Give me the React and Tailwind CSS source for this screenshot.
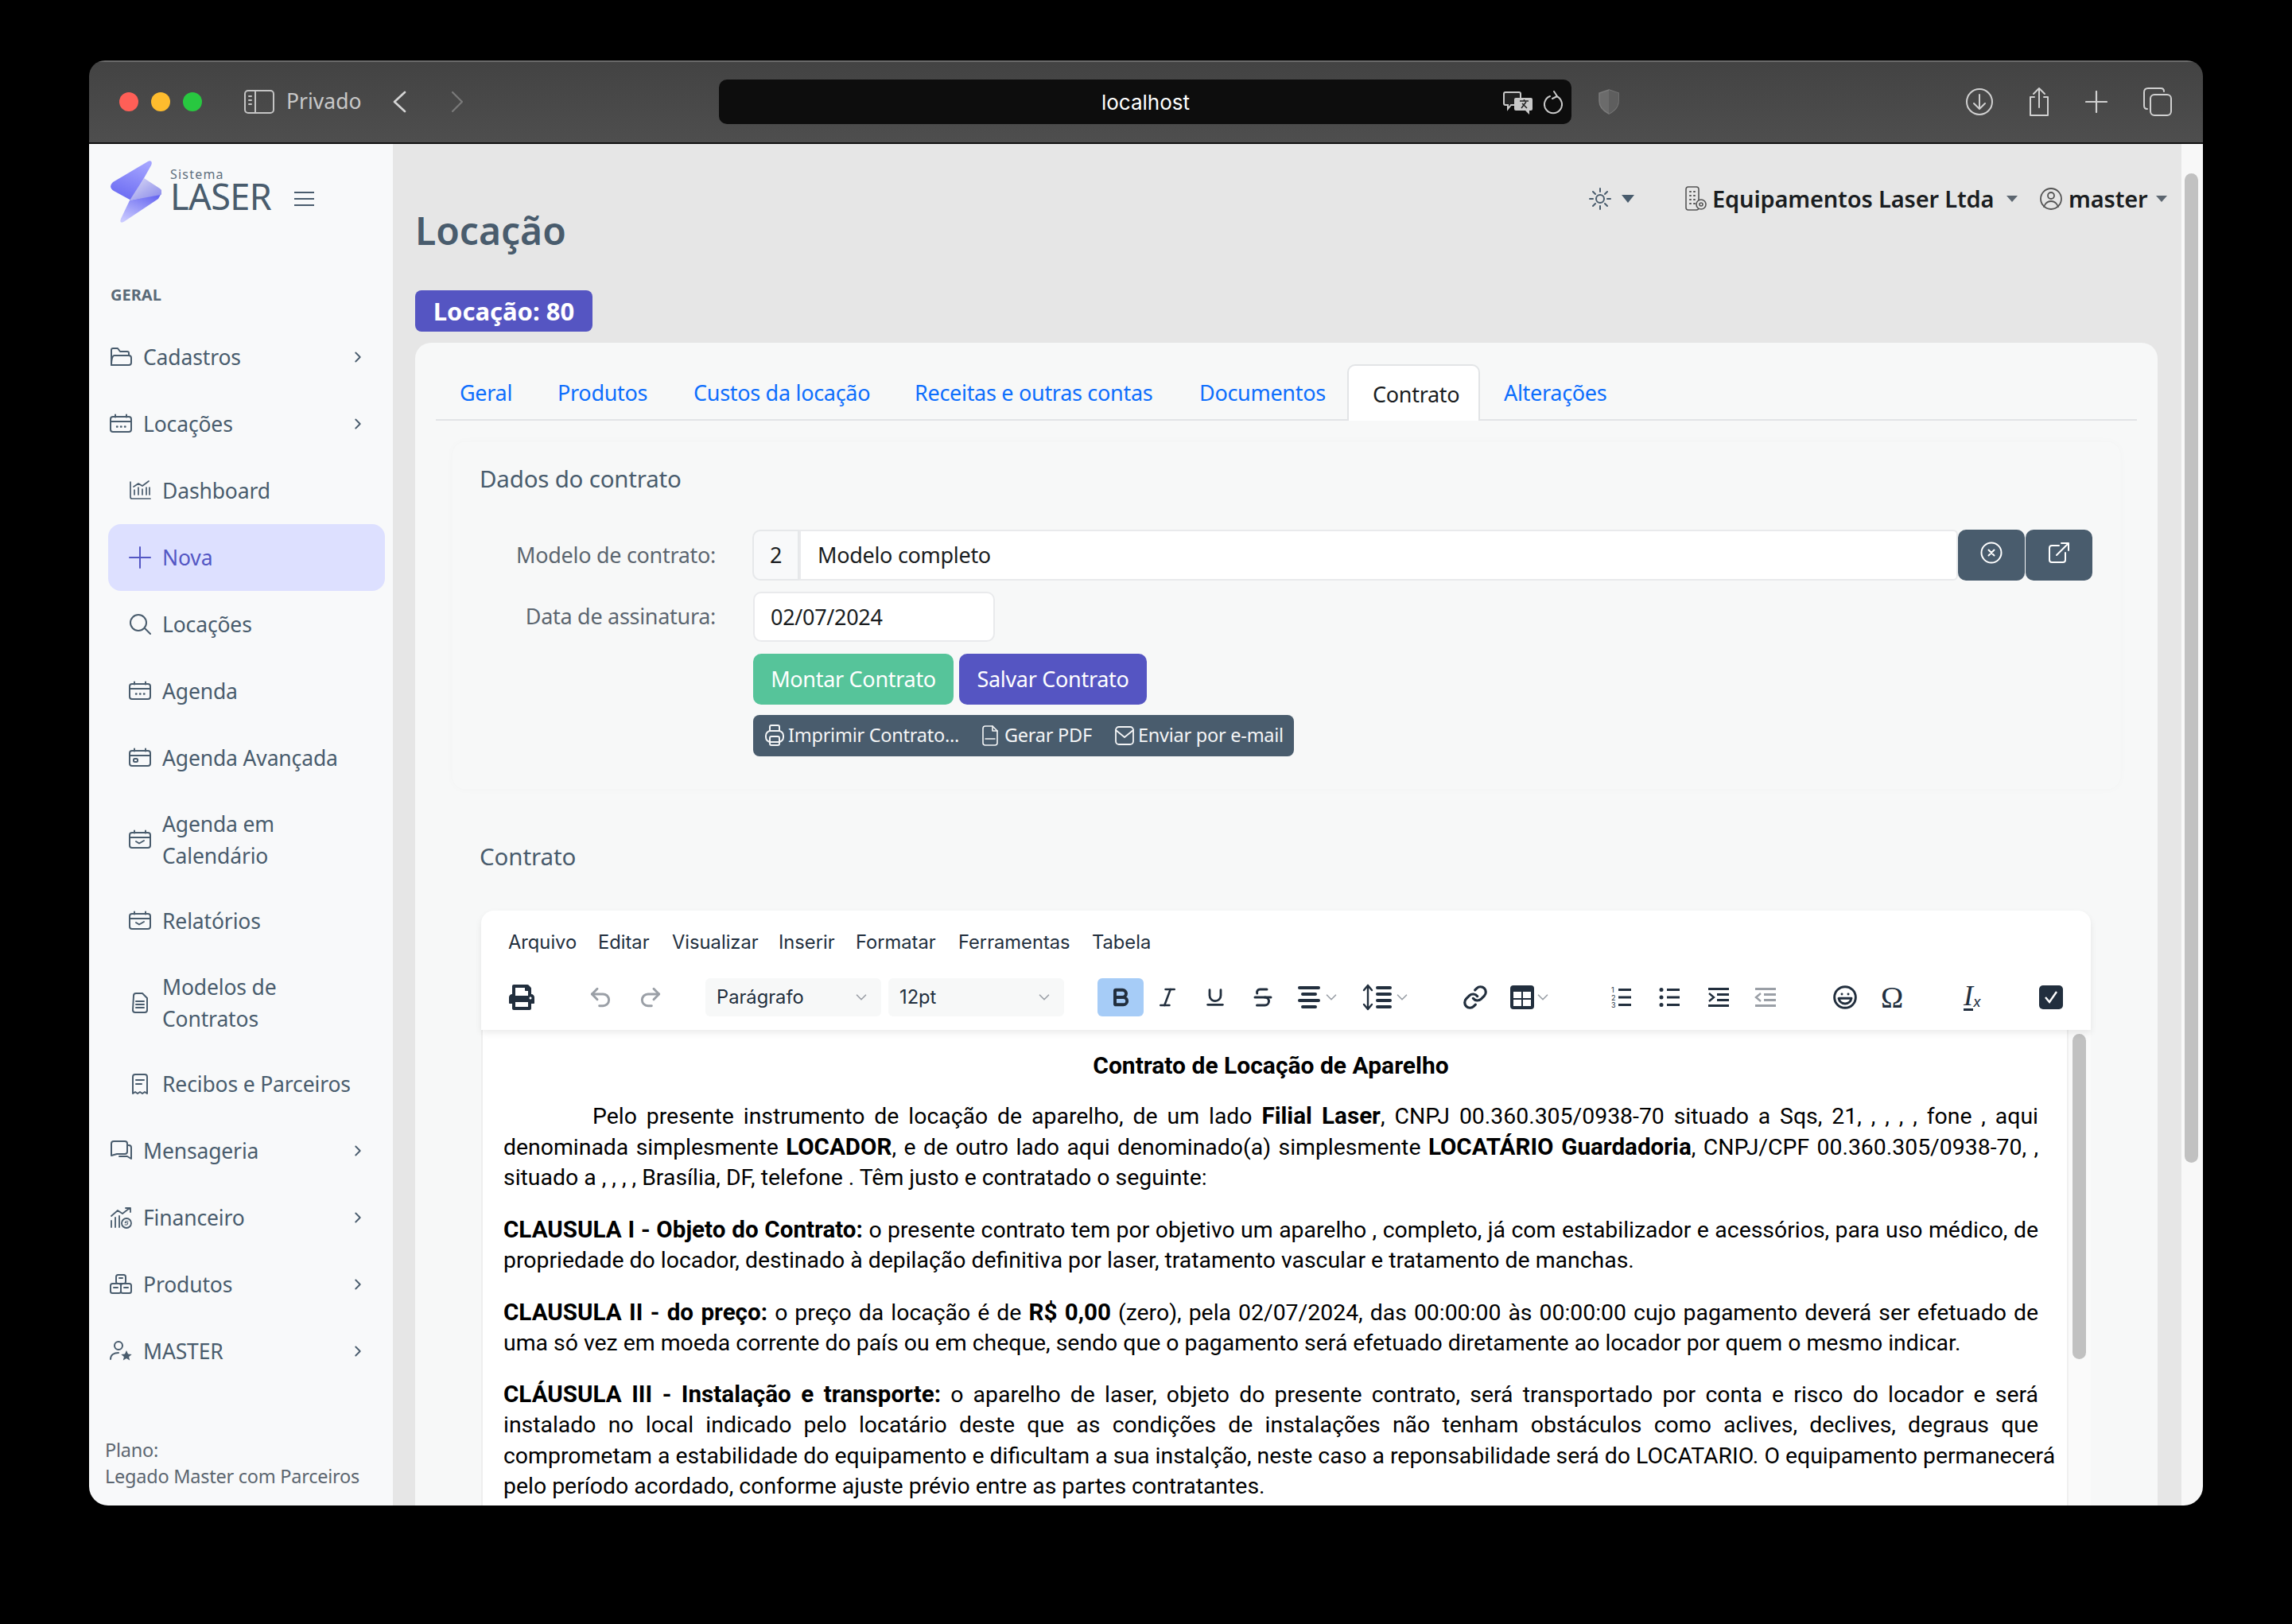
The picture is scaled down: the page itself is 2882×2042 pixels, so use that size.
import React from 'react';
import { Bold, Italic, Underline, Strikethrough, Link, Laugh, ChevronDown, ChevronRight, Undo2, Redo2 } from 'lucide-react';
import { FaPrint } from 'react-icons/fa';

const Svg = ({ s = 28, h, vb = '0 0 28 28', c = 'currentColor', sw = 2, children, className = '' }) => (
    <svg width={s} height={h || s} viewBox={vb} fill="none" stroke={c} strokeWidth={sw} strokeLinecap="round" strokeLinejoin="round" className={`shrink-0 ${className}`}>
        {children}
    </svg>
);

const CalDots = () => (
    <Svg><rect x="1" y="5" width="26" height="19" rx="3" /><path d="M1 11h26M7 2.5v3M21 2.5v3" /><path d="M9 17.5h.5M14 17.5h.5M19 17.5h.5" strokeWidth="2.4" /></Svg>
);
const CalCard = () => (
    <Svg><rect x="1" y="5" width="26" height="19" rx="3" /><path d="M1 11h26M7 2.5v3M21 2.5v3" /><rect x="6" y="15" width="5" height="4" rx="1.5" /></Svg>
);
const CalCheck = () => (
    <Svg><rect x="1" y="5" width="26" height="19" rx="3" /><path d="M1 11h26M7 2.5v3M21 2.5v3" /><path d="M9 16l4 2.5 6-3.5" /></Svg>
);
const FolderOpen = () => (
    <Svg><path d="M2 24V5a2 2 0 0 1 2-2h6l3 4h9a2 2 0 0 1 2 2v3" /><path d="M2 24c0-1 0-8 2-11a2 2 0 0 1 2-1h18c2 0 3 1 3 3v6c0 2-1 3-3 3H2z" /></Svg>
);
const ChartIcon = () => (
    <Svg sw={1.7}><path d="M2 3v19a2 2 0 0 0 2 2h23" /><path d="M7 19v-6M12 19v-9M17 19v-7M22 19v-9M26 19v-9" /><path d="M6 9l6-4 5 3 8-6" /></Svg>
);
const PlusIcon = () => <Svg><path d="M14 1v26M1 14h26" /></Svg>;
const SearchIcon = () => <Svg><circle cx="12" cy="12" r="10" /><path d="M20 19l7 7" /></Svg>;
const DocIcon = () => (
    <Svg><path d="M6 5a3 3 0 0 1 3-3h8l6 6v15a3 3 0 0 1-3 3H8a3 3 0 0 1-3-3z" /><path d="M9 12h10M9 16h10M9 20h10" /></Svg>
);
const ReceiptIcon = () => (
    <Svg><path d="M5 26V5a3 3 0 0 1 3-3h12a3 3 0 0 1 3 3v21l-3-2-3 2-3-2-3 2-3-2z" /><path d="M9 9h10M9 14h7" /></Svg>
);
const ChatIcon = () => (
    <Svg><path d="M2 5a3 3 0 0 1 3-3h14a3 3 0 0 1 3 3v10a3 3 0 0 1-3 3H9l-7 2z" /><path d="M22 7h2a3 3 0 0 1 3 3v14l-5-3H12" /></Svg>
);
const FinanceIcon = () => (
    <Svg sw={1.8}><path d="M2 26v-8M7 26V14M12 26V12" /><circle cx="21" cy="21" r="6" /><path d="M2 12L10 5l6 4 9-7M20 2h6v5" /><path d="M23 18.5h-3l-1 2h4l-1 2.5h-3" strokeWidth="1" /></Svg>
);
const BoxesIcon = () => (
    <Svg><rect x="8" y="2" width="12" height="11" rx="2.5" /><rect x="1" y="13" width="13" height="12" rx="2.5" /><rect x="14" y="13" width="13" height="12" rx="2.5" /><path d="M12 6h4M5 18h5M18 18h5" /></Svg>
);
const UserStarIcon = () => (
    <Svg><circle cx="11" cy="7" r="5" /><path d="M1 24c0-5 4-8 10-8" /><path d="M21 13l2 4.5 4.7.4-3.6 3 1.1 4.6-4.2-2.5-4.2 2.5 1.1-4.6-3.6-3 4.7-.4z" fill="currentColor" stroke="none" /></Svg>
);

const Row = ({ icon, label, sub, active, chev, tall, cls = '' }) => (
    <div
        className={`flex items-center shrink-0 ${tall ? 'h-[121px]' : 'h-[84px]'} ${sub ? 'ml-[24px] w-[348px] pl-[26px] rounded-2xl' : 'pl-[26px] pr-[33px]'} ${active ? 'bg-[#dde0ff] text-[#5457c4]' : 'text-[#495c6d]'} ${cls}`}
    >
        <span className="w-[28px] flex justify-center">{icon}</span>
        <span className="ml-[14px] flex-1 text-[26.5px] tracking-[-0.15px] leading-[40px]">{label}</span>
        {chev && <ChevronRight size={22} strokeWidth={2} />}
    </div>
);

const Sidebar = () => (
    <aside className="w-[382px] shrink-0 bg-[#f8f9fa] flex flex-col overflow-hidden">
        <div className="flex mt-[21px] ml-[27px] h-[78px]">
            <svg width="64" height="78" viewBox="0 0 64 78" className="shrink-0">
                <defs>
                    <linearGradient id="bU" x1="0.7" y1="0" x2="0.3" y2="1"><stop offset="0" stopColor="#a4a4ff" /><stop offset="1" stopColor="#6a6af2" /></linearGradient>
                    <linearGradient id="bL" x1="0.8" y1="0" x2="0.2" y2="1"><stop offset="0" stopColor="#6464f0" /><stop offset="1" stopColor="#c9c9ff" /></linearGradient>
                    <linearGradient id="bC" x1="0" y1="0" x2="1" y2="1"><stop offset="0" stopColor="#dcdcf5" /><stop offset="1" stopColor="#8585ea" /></linearGradient>
                </defs>
                <path d="M47 1C51-1 53 2 51 6L42 22L26 50L4 38C-1 35-1 31 3 27Z" fill="url(#bU)" />
                <path d="M64 41L60 48L18 76C14 79 11 78 13 73L24 50Z" fill="url(#bL)" />
                <path d="M42 22L62 35C66 38 66 41 63 43L24 50Z" fill="url(#bC)" />
            </svg>
            <div className="ml-[11px] flex flex-col">
                <span className="text-[16px] leading-[16px] mt-[9px] tracking-[1.2px] text-[#5e6f7e]">Sistema</span>
                <span className="text-[45px] leading-[40px] tracking-[-0.6px] text-[#495c6d]">LASER</span>
            </div>
            <div className="ml-[29px] mt-[39px] w-[25px] h-[18px] flex flex-col justify-between">
                <span className="h-[2px] bg-[#495c6d]" />
                <span className="h-[2px] bg-[#495c6d]" />
                <span className="h-[2px] bg-[#495c6d]" />
            </div>
        </div>
        <div className="mt-[80px] ml-[27px] h-[22px] leading-[22px] text-[20px] font-bold text-[#5a6a78]">GERAL</div>
        <div className="mt-[25px] flex flex-col">
            <Row icon={<FolderOpen />} label="Cadastros" chev />
            <Row icon={<CalDots />} label="Locações" chev />
            <Row sub icon={<ChartIcon />} label="Dashboard" />
            <Row sub active icon={<PlusIcon />} label="Nova" />
            <Row sub icon={<SearchIcon />} label="Locações" />
            <Row sub icon={<CalDots />} label="Agenda" />
            <Row sub icon={<CalCard />} label="Agenda Avançada" />
            <Row sub tall icon={<CalCheck />} label={<>Agenda em<br />Calendário</>} />
            <Row sub icon={<CalCheck />} label="Relatórios" />
            <Row sub tall icon={<DocIcon />} label={<>Modelos de<br />Contratos</>} />
            <Row sub icon={<ReceiptIcon />} label="Recibos e Parceiros" />
            <Row icon={<ChatIcon />} label="Mensageria" chev />
            <Row icon={<FinanceIcon />} label="Financeiro" chev />
            <Row icon={<BoxesIcon />} label="Produtos" chev />
            <Row icon={<UserStarIcon />} label="MASTER" chev />
        </div>
        <div className="mt-auto pb-[20px] pl-[20px] text-[23.5px] tracking-[-0.25px] leading-[33px] text-[#5c6670]">
            <div>Plano:</div>
            <div>Legado Master com Parceiros</div>
        </div>
    </aside>
);

const TitleBar = () => (
    <div className="h-[105px] shrink-0 flex items-start bg-gradient-to-b from-[#434343] to-[#4e4e4e] border-b-2 border-[#111] border-t-2 border-t-[#6a6a6a] text-[#c4c4c4]">
        <div className="flex items-center h-[56px] mt-[22px] w-full">
            <div className="flex ml-[38px] gap-[16px]">
                <span className="w-[24px] h-[24px] rounded-full bg-[#ff5f57]" />
                <span className="w-[24px] h-[24px] rounded-full bg-[#febc2e]" />
                <span className="w-[24px] h-[24px] rounded-full bg-[#28c840]" />
            </div>
            <Svg s={38} h={30} vb="0 0 38 30" sw={2} className="ml-[53px]">
                <rect x="1" y="1" width="36" height="28" rx="4" /><path d="M14 1v28M6 8h3M6 13h3M6 18h3" />
            </Svg>
            <span className="ml-[15px] text-[26.5px] text-[#c8c8c8]">Privado</span>
            <Svg s={20} h={28} vb="0 0 20 28" sw={2.6} c="#d5d5d5" className="ml-[38px]"><path d="M17 2L4 14l13 12" /></Svg>
            <Svg s={18} h={28} vb="0 0 18 28" sw={2.2} c="#7a7a7a" className="ml-[54px]"><path d="M3 2l12 12L3 26" /></Svg>
            <div className="ml-[320px] w-[1072px] h-[56px] rounded-[10px] bg-[#0d0d0d] flex items-center relative">
                <span className="flex-1 text-center text-white text-[26px] font-['Inter',sans-serif]">localhost</span>
                <svg width="38" height="30" viewBox="0 0 38 30" className="absolute left-[986px] top-[14px]">
                    <path d="M3 2h17a2 2 0 0 1 2 2v12a2 2 0 0 1-2 2H10l-4 5v-5H3a2 2 0 0 1-2-2V4a2 2 0 0 1 2-2z" fill="#222" stroke="#c9c9c9" strokeWidth="2" />
                    <path d="M16 9h19a2 2 0 0 1 2 2v12a2 2 0 0 1-2 2h-2v5l-5-5H16a2 2 0 0 1-2-2V11a2 2 0 0 1 2-2z" fill="#c9c9c9" />
                    <path d="M21 13h11M26.5 11v2M23 22l6-8M30 22l-6-6" stroke="#222" strokeWidth="1.5" fill="none" />
                </svg>
                <svg width="24" height="30" viewBox="0 0 24 30" fill="none" stroke="#c9c9c9" strokeWidth="2" strokeLinecap="round" className="absolute left-[1037px] top-[14px]">
                    <path d="M8 7a11 11 0 1 0 8 0" /><path d="M13 1l4 6-6 3" />
                </svg>
            </div>
            <svg width="28" height="32" viewBox="0 0 28 32" className="ml-[33px] shrink-0">
                <path d="M14 1l12 4v10c0 8-6 13-12 16C8 28 2 23 2 15V5z" fill="#6b6b6b" stroke="#7b7b7b" strokeWidth="1.5" />
                <path d="M14 1l12 4v10c0 8-6 13-12 16z" fill="#5e5e5e" />
            </svg>
            <div className="flex-1" />
            <Svg s={36} sw={2} vb="0 0 36 36" c="#d0d0d0" className="mr-[42px]"><circle cx="18" cy="18" r="16" /><path d="M18 9v18M11 20l7 7 7-7" /></Svg>
            <Svg s={30} h={38} vb="0 0 30 38" sw={2} c="#d0d0d0" className="mr-[43px]"><path d="M9 13H4v23h22V13h-5" /><path d="M15 26V2M8 9l7-7 7 7" /></Svg>
            <Svg s={28} sw={2.2} c="#d0d0d0" className="mr-[45px]"><path d="M14 1v26M1 14h26" /></Svg>
            <Svg s={36} sw={2} vb="0 0 36 36" c="#d0d0d0" className="mr-[39px]"><rect x="9" y="9" width="26" height="26" rx="5" /><path d="M5 27c-3 0-4-2-4-4V6c0-3 2-5 5-5h16c3 0 4 2 4 4" /></Svg>
        </div>
    </div>
);

const TABS = [
    { label: 'Geral', w: 'w-[123px]' },
    { label: 'Produtos', w: 'w-[171px]' },
    { label: 'Custos da locação', w: 'w-[278px]' },
    { label: 'Receitas e outras contas', w: 'w-[358px]' },
    { label: 'Documentos', w: 'w-[216px]' },
    { label: 'Contrato', w: 'w-[167px]', active: true },
    { label: 'Alterações', w: 'w-[200px]' },
];

const Caret = ({ cls = 'ml-[15px]' }) => (
    <span className={`w-0 h-0 border-x-[7px] border-x-transparent border-t-[8px] border-t-[#5c6670] ${cls}`} />
);

const PrintSmall = () => (
    <Svg s={24} h={28} vb="0 0 24 28"><path d="M6 8V3a2 2 0 0 1 2-2h8a2 2 0 0 1 2 2v5" /><rect x="1" y="8" width="22" height="14" rx="6" /><rect x="6" y="15" width="12" height="11" rx="2" /></Svg>
);

const Line = ({ children, left, cls = '' }) => (
    <div className={`h-[38.5px] leading-[38.5px] whitespace-nowrap ${left ? 'text-left' : 'text-justify [text-align-last:justify] !whitespace-normal'} ${cls}`}>{children}</div>
);

const B = ({ children }) => <b className="text-[29.6px] leading-none">{children}</b>;

const TBtn = ({ children, w = 'w-[58px]', cls = '' }) => (
    <div className={`h-[48px] ${w} flex items-center justify-center shrink-0 rounded-md ${cls}`}>{children}</div>
);

const ToolLines = ({ rows, cls = '' }) => (
    <div className={`flex flex-col gap-[4px] ${cls}`}>
        {rows.map((w, i) => <span key={i} className={`block h-[4px] ${w} bg-current rounded-sm`} />)}
    </div>
);

const Chev = () => <ChevronDown size={22} strokeWidth={1.8} className="text-[#9a9fa6] shrink-0" />;

const Editor = () => (
    <div className="mt-[48px] ml-[36px] mr-[37px] flex flex-col tracking-normal">
        <div className="relative z-10 bg-white rounded-t-[16px] shadow-[0_4px_8px_rgba(0,0,0,0.08)] h-[150px] text-[#222f3e] font-['Inter',sans-serif]">
            <div className="h-[80px] pt-[20px] pl-[34px] flex text-[23.7px] leading-[40px]">
                <span className="w-[113px]">Arquivo</span>
                <span className="w-[93px]">Editar</span>
                <span className="w-[134px]">Visualizar</span>
                <span className="w-[97px]">Inserir</span>
                <span className="w-[129px]">Formatar</span>
                <span className="w-[168px]">Ferramentas</span>
                <span>Tabela</span>
            </div>
            <div className="h-[48px] mt-[5px] flex items-center pl-[22px]">
                <TBtn><FaPrint size={32} /></TBtn>
                <TBtn cls="ml-[41px]"><Undo2 size={32} strokeWidth={2.2} className="text-[#9a9fa6]" /></TBtn>
                <TBtn cls="ml-[5px]"><Redo2 size={32} strokeWidth={2.2} className="text-[#9a9fa6]" /></TBtn>
                <div className="ml-[40px] w-[221px] h-[48px] rounded-md bg-[#f7f8f8] flex items-center justify-between pl-[14px] pr-[14px] text-[23.7px]"><span>Parágrafo</span><Chev /></div>
                <div className="ml-[9px] w-[221px] h-[48px] rounded-md bg-[#f7f8f8] flex items-center justify-between pl-[14px] pr-[14px] text-[23.7px]"><span>12pt</span><Chev /></div>
                <TBtn cls="ml-[42px] bg-[#a6ccf7]"><Bold size={28} strokeWidth={3.4} /></TBtn>
                <TBtn cls="ml-[1px]"><Italic size={30} strokeWidth={2} /></TBtn>
                <TBtn cls="ml-[2px]"><Underline size={28} strokeWidth={2.4} /></TBtn>
                <TBtn cls="ml-[2px]"><Strikethrough size={30} strokeWidth={2.4} /></TBtn>
                <div className="ml-[15px] w-[60px] flex items-center"><ToolLines rows={['w-[28px]', 'w-[20px] self-center', 'w-[28px]', 'w-[20px] self-center']} cls="w-[28px] mr-[3px]" /><Chev /></div>
                <div className="ml-[21px] w-[74px] flex items-center">
                    <Svg s={14} h={34} vb="0 0 14 34" sw={2.4}><path d="M7 2v30M2 8l5-6 5 6M2 26l5 6 5-6" /></Svg>
                    <ToolLines rows={['w-[20px]', 'w-[20px]', 'w-[20px]', 'w-[20px]']} cls="ml-[3px] mr-[2px]" />
                    <Chev />
                </div>
                <TBtn cls="ml-[39px]"><Link size={32} strokeWidth={2.4} /></TBtn>
                <div className="ml-[15px] w-[62px] flex items-center">
                    <svg width="30" height="30" viewBox="0 0 30 30" className="shrink-0"><rect width="30" height="30" rx="4" fill="#222f3e" /><rect x="4" y="8" width="10" height="8" fill="#fff" /><rect x="16" y="8" width="10" height="8" fill="#fff" /><rect x="4" y="18" width="10" height="8" fill="#fff" /><rect x="16" y="18" width="10" height="8" fill="#fff" /></svg>
                    <Chev />
                </div>
                <TBtn cls="ml-[49px]">
                    <svg width="30" height="30" viewBox="0 0 30 30" fill="#222f3e"><rect x="11" y="4" width="16" height="3" /><rect x="11" y="13.5" width="16" height="3" /><rect x="11" y="23" width="16" height="3" /><text x="2" y="9" fontSize="9" fontFamily="Inter">1</text><text x="2" y="18.5" fontSize="9" fontFamily="Inter">2</text><text x="2" y="28" fontSize="9" fontFamily="Inter">3</text></svg>
                </TBtn>
                <TBtn cls="ml-[3px]">
                    <svg width="30" height="30" viewBox="0 0 30 30" fill="#222f3e"><rect x="11" y="4" width="16" height="3" /><rect x="11" y="13.5" width="16" height="3" /><rect x="11" y="23" width="16" height="3" /><circle cx="4" cy="5.5" r="2.5" /><circle cx="4" cy="15" r="2.5" /><circle cx="4" cy="24.5" r="2.5" /></svg>
                </TBtn>
                <TBtn cls="ml-[3px]">
                    <svg width="30" height="30" viewBox="0 0 30 30" fill="#222f3e"><rect x="2" y="3" width="26" height="3" /><rect x="13" y="10" width="15" height="3" /><rect x="13" y="17" width="15" height="3" /><rect x="2" y="24" width="26" height="3" /><path d="M3 10l6 5-6 5" fill="none" stroke="#222f3e" strokeWidth="2.4" /></svg>
                </TBtn>
                <TBtn cls="ml-[1px]">
                    <svg width="30" height="30" viewBox="0 0 30 30" fill="#9a9fa6"><rect x="2" y="3" width="26" height="3" /><rect x="13" y="10" width="15" height="3" /><rect x="13" y="17" width="15" height="3" /><rect x="2" y="24" width="26" height="3" /><path d="M9 10l-6 5 6 5" fill="none" stroke="#9a9fa6" strokeWidth="2.4" /></svg>
                </TBtn>
                <TBtn cls="ml-[42px]"><Laugh size={32} strokeWidth={2.2} /></TBtn>
                <TBtn cls="ml-[1px] text-[38px] leading-none font-['Liberation_Serif',serif]">Ω</TBtn>
                <TBtn cls="ml-[43px]">
                    <span className="flex items-end border-b-[3px] border-[#222f3e] pb-[1px]"><span className="italic text-[36px] leading-[30px] font-['Liberation_Serif',serif]">I</span></span>
                    <span className="text-[18px] leading-none self-end mb-[9px] italic">x</span>
                </TBtn>
                <TBtn cls="ml-[41px]">
                    <svg width="30" height="30" viewBox="0 0 30 30"><rect width="30" height="30" rx="5" fill="#222f3e" /><path d="M8 15l5 6 9-13" fill="none" stroke="#fff" strokeWidth="2.4" /></svg>
                </TBtn>
            </div>
        </div>
        <div className="flex bg-white border-l-2 border-[#eeeeee] h-[700px]">
            <div className="flex-1 min-w-0 pl-[26px] pt-[26px] text-black text-[28.4px] font-['Roboto',sans-serif]">
                <div className="w-[1930px]">
                    <div className="h-[38px] leading-[38px] text-center font-bold text-[30px]">Contrato de Locação de Aparelho</div>
                    <div className="mt-[26px]">
                        <Line><span className="ml-[112px]" />Pelo presente instrumento de locação de aparelho, de um lado <B>Filial Laser</B>, CNPJ 00.360.305/0938-70 situado a Sqs, 21, , , , , fone , aqui</Line>
                        <Line>denominada simplesmente <B>LOCADOR</B>, e de outro lado aqui denominado(a) simplesmente <B>LOCATÁRIO Guardadoria</B>, CNPJ/CPF 00.360.305/0938-70, ,</Line>
                        <Line left>situado a , , , , Brasília, DF, telefone . Têm justo e contratado o seguinte:</Line>
                    </div>
                    <div className="mt-[27px]">
                        <Line><B>CLAUSULA I - Objeto do Contrato:</B> o presente contrato tem por objetivo um aparelho , completo, já com estabilizador e acessórios, para uso médico, de</Line>
                        <Line left>propriedade do locador, destinado à depilação definitiva por laser, tratamento vascular e tratamento de manchas.</Line>
                    </div>
                    <div className="mt-[27px]">
                        <Line><B>CLAUSULA II - do preço:</B> o preço da locação é de <B>R$ 0,00</B> (zero), pela 02/07/2024, das 00:00:00 às 00:00:00 cujo pagamento deverá ser efetuado de</Line>
                        <Line left>uma só vez em moeda corrente do país ou em cheque, sendo que o pagamento será efetuado diretamente ao locador por quem o mesmo indicar.</Line>
                    </div>
                    <div className="mt-[26px]">
                        <Line><B>CLÁUSULA III - Instalação e transporte:</B> o aparelho de laser, objeto do presente contrato, será transportado por conta e risco do locador e será</Line>
                        <Line>instalado no local indicado pelo locatário deste que as condições de instalações não tenham obstáculos como aclives, declives, degraus que</Line>
                        <Line left>comprometam a estabilidade do equipamento e dificultam a sua instalção, neste caso a reponsabilidade será do LOCATARIO. O equipamento permanecerá</Line>
                        <Line left>pelo período acordado, conforme ajuste prévio entre as partes contratantes.</Line>
                    </div>
                </div>
            </div>
            <div className="w-[30px] shrink-0 bg-[#fafafa] border-l-2 border-[#f0f0f0] pl-[5px]">
                <div className="mt-[5px] w-[17px] h-[409px] rounded-full bg-[#c1c1c1]" />
            </div>
        </div>
    </div>
);

const Main = () => (
    <main className="flex-1 min-w-0 bg-[#e6e6e6] pl-[28px] pr-[30px] overflow-hidden">
        <div className="h-[184px] flex justify-between items-start">
            <h1 className="mt-[77px] text-[48px] leading-[64px] font-semibold text-[#495c6d]">Locação</h1>
            <div className="mt-[47px] -mr-[12px] flex items-center h-[44px] text-[29px] font-semibold tracking-[-0.15px] text-[#1a1d21]">
                <Svg s={28} sw={2} c="#495c6d" vb="0 0 28 28" className="ml-0"><circle cx="14" cy="14" r="5" /><path d="M14 1v4M14 23v4M1 14h4M23 14h4M5 5l3 3M20 20l3 3M5 23l3-3M20 8l3-3" /></Svg>
                <span className="ml-[13px] w-0 h-0 border-x-[8px] border-x-transparent border-t-[10px] border-t-[#495c6d]" />
                <Svg s={28} h={32} vb="0 0 28 32" sw={1.6} c="#555" className="ml-[63px]"><rect x="2" y="1" width="16" height="29" rx="3" /><path d="M7 7h1M12 7h1M7 12h1M12 12h1M7 17h1M12 17h1M7 22h1M12 22h1" strokeWidth="2" /><circle cx="21" cy="23" r="6" fill="#e6e6e6" /><circle cx="21" cy="23" r="2" /></Svg>
                <span className="ml-[7px] w-[355px] whitespace-nowrap">Equipamentos Laser Ltda</span>
                <Caret />
                <Svg s={28} h={32} vb="0 0 28 32" sw={1.8} c="#555" className="ml-[28px]"><circle cx="14" cy="16" r="13" /><circle cx="14" cy="12" r="4" /><path d="M5 26c2-5 5-7 9-7s7 2 9 7" /></Svg>
                <span className="ml-[8px] w-[97px]">master</span>
                <Caret cls="ml-[13px]" />
            </div>
        </div>
        <div className="h-[52px] w-[223px] rounded-[8px] bg-[#5555c2] text-white text-[31px] font-bold leading-[52px] text-center">Locação: 80</div>
        <div className="mt-[14px] h-[1700px] rounded-[20px] bg-[#f7f8f8] pt-[27px] px-[26px] text-[27px] tracking-[-0.3px]">
            <div className="flex h-[71px] border-b-2 border-[#e2e4e6]">
                {TABS.map((t) => (
                    <div key={t.label} className={`${t.w} h-[71px] pl-[30px] leading-[72px] whitespace-nowrap ${t.active ? 'bg-white border-2 border-b-0 border-[#e2e4e6] rounded-t-[10px] text-[#1a1d21] pl-[28px]' : 'text-[#0d6efd]'}`}>{t.label}</div>
                ))}
            </div>
            <div className="mt-[27px] mx-[21px] rounded-[16px] shadow-[0_0_12px_rgba(0,0,0,0.025)] pt-[26px] pl-[34px] pr-[35px] pb-[41px]">
                <h2 className="h-[40px] leading-[40px] text-[29.5px] tracking-[-0.2px] text-[#495c6d]">Dados do contrato</h2>
                <div className="mt-[44px] flex items-center h-[64px]">
                    <span className="w-[297px] text-right text-[#5c6670]">Modelo de contrato:</span>
                    <span className="ml-[46px] w-[59px] h-[64px] leading-[60px] text-center border-2 border-[#e6e8ea] bg-[#f8f9fa] rounded-l-[10px] text-[#1a1d21]">2</span>
                    <div className="flex-1 h-[64px] leading-[60px] pl-[21px] bg-white border-2 border-[#e9eaec] rounded-r-[6px] text-[#1a1d21]">Modelo completo</div>
                    <div className="w-[84px] h-[64px] rounded-[10px] bg-[#495c6d] flex items-start justify-center pt-[15px]">
                        <Svg s={28} vb="0 0 28 28" c="#fff" sw={2}><circle cx="14" cy="14" r="12.5" /><path d="M10.5 10.5l7 7M17.5 10.5l-7 7" /></Svg>
                    </div>
                    <div className="ml-[1px] w-[84px] h-[64px] rounded-[10px] bg-[#495c6d] flex items-start justify-center pt-[15px]">
                        <Svg s={28} vb="0 0 28 28" c="#fff" sw={2}><path d="M14 5H5a3 3 0 0 0-3 3v15a3 3 0 0 0 3 3h14a3 3 0 0 0 3-3v-9" /><path d="M11 17L26 2M17 2h9v9" /></Svg>
                    </div>
                </div>
                <div className="mt-[14px] flex items-center h-[63px]">
                    <span className="w-[297px] text-right text-[#5c6670]">Data de assinatura:</span>
                    <div className="ml-[47px] w-[304px] h-[63px] leading-[59px] pl-[20px] bg-white border-2 border-[#e9eaec] rounded-[10px] text-[#1a1d21]">02/07/2024</div>
                </div>
                <div className="mt-[15px] ml-[344px] flex h-[64px] gap-[7px] text-white">
                    <div className="w-[252px] rounded-[10px] bg-[#56c49a] text-center leading-[64px]">Montar Contrato</div>
                    <div className="w-[236px] rounded-[10px] bg-[#5555c2] text-center leading-[64px]">Salvar Contrato</div>
                </div>
                <div className="mt-[13px] ml-[344px] w-[680px] h-[52px] rounded-[8px] bg-[#495c6d] text-[#f4f5f6] text-[23.5px] tracking-[-0.25px] flex items-center pl-[15px]">
                    <PrintSmall />
                    <span className="ml-[5px] w-[212px] whitespace-nowrap">Imprimir Contrato...</span>
                    <Svg s={22} h={28} vb="0 0 22 28" sw={1.6} className="ml-[31px]"><path d="M2 5a3 3 0 0 1 3-3h9l6 6v15a3 3 0 0 1-3 3H5a3 3 0 0 1-3-3z" /><path d="M14 2v6h6M5 18h12" /></Svg>
                    <span className="ml-[7px] w-[110px] whitespace-nowrap">Gerar PDF</span>
                    <Svg s={24} h={26} vb="0 0 24 26" sw={1.8} className="ml-[29px]"><rect x="1" y="2" width="22" height="22" rx="4" /><path d="M1 6l11 9 11-9" /></Svg>
                    <span className="ml-[5px] whitespace-nowrap">Enviar por e-mail</span>
                </div>
            </div>
            <div className="mt-[39px] mx-[21px] pt-[26px] rounded-[16px]">
                <h2 className="h-[40px] ml-[34px] leading-[40px] text-[29.5px] tracking-[-0.1px] text-[#495c6d]">Contrato</h2>
                <Editor />
            </div>
        </div>
    </main>
);

const App = () => (
    <div className="w-[2882px] h-[2042px] bg-black overflow-hidden pt-[76px] pl-[112px] font-['Noto_Sans',sans-serif]">
        <div className="w-[2658px] h-[1817px] rounded-t-[20px] rounded-b-[24px] overflow-hidden flex flex-col">
            <TitleBar />
            <div className="flex flex-1 min-h-0">
                <Sidebar />
                <Main />
                <div className="w-[27px] shrink-0 bg-[#f8f8f8] pl-[4px]">
                    <div className="mt-[37px] w-[17px] h-[1244px] rounded-full bg-[#c1c1c1]" />
                </div>
            </div>
        </div>
    </div>
);

export default App;
